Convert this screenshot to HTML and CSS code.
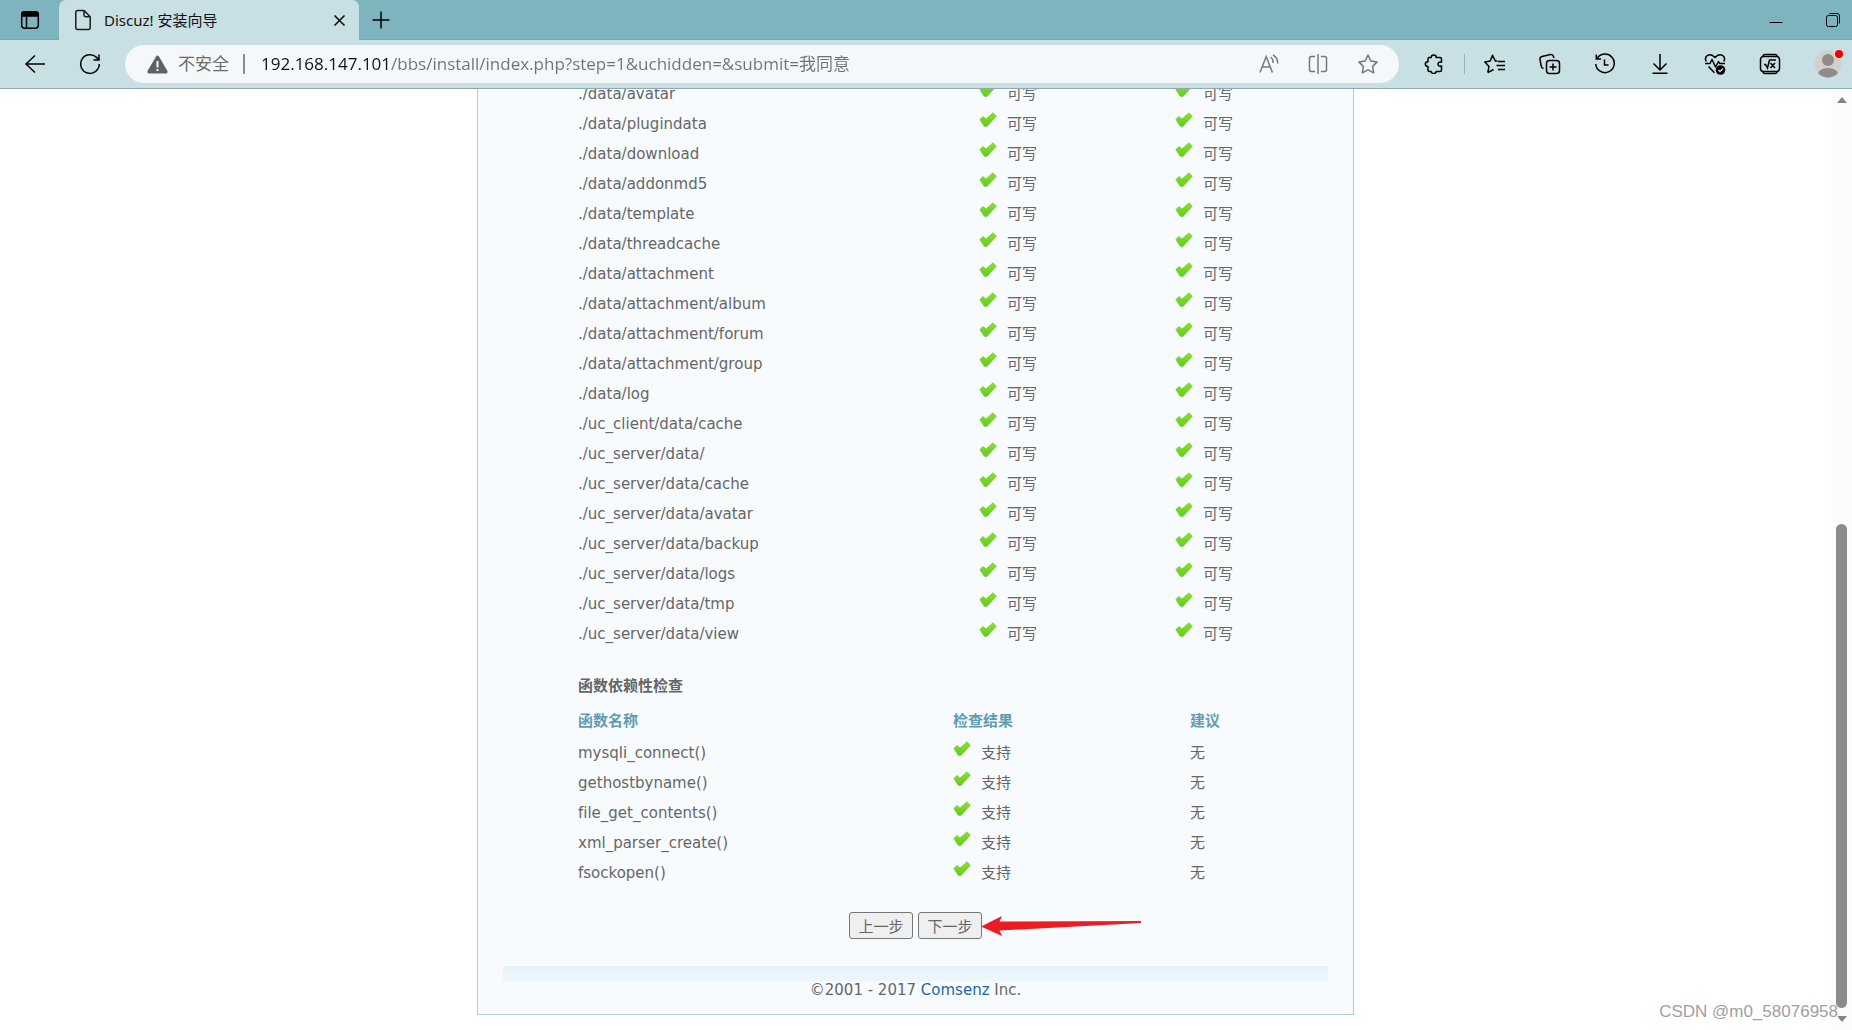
FILE: index.html
```html
<!DOCTYPE html>
<html lang="zh-CN">
<head>
<meta charset="utf-8">
<title>Discuz! 安装向导</title>
<link rel="stylesheet" href="styles.css">
</head>
<body>
<svg class="defs" aria-hidden="true">
  <defs>
    <linearGradient id="green" x1="0" y1="0" x2="0" y2="1"><stop offset="0" stop-color="#8be41c"/><stop offset="1" stop-color="#62cc1c"/></linearGradient>
    <symbol id="check" viewBox="0 0 18 16"><path d="M.8 7.600 4 4.500l3 2.500L14 .8l3.300 3.400L8.500 14Q6.800 15.600 5 14z" fill="url(#green)" stroke="#7fc46a" stroke-width=".8" stroke-linejoin="round"/></symbol>
  </defs>
</svg>
<div class="browser">
  <header class="tabbar">
    <button class="icon-btn workspaces" aria-label="标签页操作"><svg width="20" height="20" viewBox="0 0 20 20"><rect x="1.700" y="1.700" width="16.600" height="16.600" rx="3"/><path d="M2 3.500Q2 2 4 2h12q2 0 2 2v2H2z" fill="#000"/><path d="M6.500 6v12"/></svg></button>
    <div class="tab">
      <svg width="18" height="22" viewBox="0 0 18 22"><path d="M1.800 3.500Q1.800 1.500 3.800 1.500H10l6.200 6.200V18.500q0 2-2 2H3.800q-2 0-2-2zM10 1.500V6q0 1.700 1.700 1.700h4.500"/></svg>
      <span class="tab-title">Discuz! 安装向导</span>
      <button class="icon-btn" aria-label="关闭标签页"><svg width="13" height="13" viewBox="0 0 13 13"><path d="M1.500 1.500l10 10M11.500 1.500l-10 10"/></svg></button>
    </div>
    <button class="icon-btn new-tab" aria-label="新建标签页"><svg width="18" height="18" viewBox="0 0 18 18"><path d="M9 .5v17M.5 9h17"/></svg></button>
    <div class="window-controls">
      <button class="icon-btn" aria-label="最小化"><svg width="14" height="14" viewBox="0 0 14 14"><path d="M.5 9.500h13"/></svg></button>
      <button class="icon-btn" aria-label="还原"><svg width="14" height="14" viewBox="0 0 14 14"><rect x=".5" y="2.500" width="11" height="11" rx="2"/><path d="M3.500.5H11Q13.500.5 13.500 3v7.500"/></svg></button>
    </div>
  </header>

  <nav class="toolbar">
    <button class="icon-btn back" aria-label="返回"><svg width="22" height="20" viewBox="0 0 22 20"><path d="M11 1.500 2 10l9 8.500M2 10h19"/></svg></button>
    <button class="icon-btn reload" aria-label="刷新"><svg width="22" height="22" viewBox="0 0 22 22"><path d="M20.300 11A9.300 9.300 0 1 1 17.500 4.400L19.700 6.700M20 1.500v5.500h-5.500"/></svg></button>
    <div class="address">
      <svg class="warn" width="21" height="19" viewBox="0 0 21 19"><path d="M9 1.500q1.500-2 3 0l8.300 14.300q1 2.500-1.300 2.700H2q-2.300-.2-1.300-2.700z" fill="#616161" stroke="none"/><path d="M10.500 6v6.500M10.500 14v2" stroke="#f4f8fa" stroke-width="2"/></svg>
      <label class="insecure" for="url">不安全</label>
      <input id="url" class="url" type="text" spellcheck="false" value="192.168.147.101/bbs/install/index.php?step=1&amp;uchidden=&amp;submit=我同意">
      <div class="address-actions">
        <button class="icon-btn" aria-label="大声朗读"><svg width="20" height="20" viewBox="0 0 20 20"><path d="M1 18.500 7.200 2.500l6.200 16M3.200 13h8M11.500 3q3 2 2.500 6M14 .8q5 3 4.700 8.700"/></svg></button>
        <button class="icon-btn" aria-label="拆分屏幕"><svg width="20" height="20" viewBox="0 0 20 20"><path d="M10 0v20M7 2.500H3.500q-2 0-2 2v11q0 2 2 2H7M13 2.500h3.500q2 0 2 2v11q0 2-2 2H13"/></svg></button>
        <button class="icon-btn" aria-label="收藏此页"><svg width="22" height="20" viewBox="0 0 22 20"><path d="M11 1.200 13.800 7l6.400.9-4.600 4.500 1.100 6.400L11 15.800l-5.700 3 1.100-6.400L1.800 7.900 8.200 7z" stroke-linejoin="round"/></svg></button>
      </div>
    </div>
    <button class="icon-btn ext" aria-label="扩展"><svg width="20" height="20" viewBox="0 0 20 20"><path d="M4.500 3.500H7.200Q7.200 1 9.700 1t2.500 2.500H16q1.500 0 1.500 1.500v3.200q-3.500-.7-3.500 1.900t3.500 1.900V16q0 1.500-1.500 1.500h-3.800q0 2-2.500 2t-2.500-2H5.500Q4 17.500 4 16v-3.500q-2.700 0-2.700-2.400T4 7.700V5q0-1.500 1.500-1.500" stroke-linejoin="round"/></svg></button>
    <div class="tools">
      <button class="icon-btn" aria-label="收藏夹"><svg width="22" height="20" viewBox="0 0 22 20"><path d="M3.800 18.700 5 12.400.9 7.900 6.200 7 8.500 1.300 11.300 7h2.200M3.800 18.700l5.700-3.200M14 7.500h7M12.500 11.500H21M14 15.500h7" stroke-linejoin="round"/></svg></button>
      <button class="icon-btn" aria-label="集锦"><svg width="22" height="22" viewBox="0 0 22 22"><rect x="7.500" y="7.500" width="13" height="13" rx="3"/><path d="M14 10.500v7M10.500 14h7M4.500 15.500Q2.500 15 2.200 13L1 6.500Q.8 4 3 3.500l8.500-2q2.500-.3 3 2l.4 1.500"/></svg></button>
      <button class="icon-btn" aria-label="历史记录"><svg width="22" height="22" viewBox="0 0 22 22"><path d="M3 5.500A9.300 9.300 0 1 1 1.700 11M2.300 1.500V6H7M10.500 6.500v5.500H14.500"/></svg></button>
      <button class="icon-btn" aria-label="下载"><svg width="22" height="22" viewBox="0 0 22 22"><path d="M11 1v15.500M4.500 10.500 11 17l6.500-6.500M3.500 20.300h15"/></svg></button>
      <button class="icon-btn" aria-label="浏览器概要"><svg width="22" height="22" viewBox="0 0 22 22"><path d="M2.200 8.500Q.2 4.500 3.500 2.300 7.500.3 11 4.500 14.500.3 18.500 2.300q3.300 2.200 1.300 6.200M1 10.500h5l2-4 3.500 7.500 3-5.500 1 2H21M4.500 13.500l6 6.300" stroke-linejoin="round"/><circle cx="16.500" cy="17" r="4.800" fill="#000" stroke="none"/><path d="m14.500 17 1.500 1.500 3-3" stroke="#c8dfe3"/></svg></button>
      <button class="icon-btn" aria-label="数学求解器"><svg width="22" height="22" viewBox="0 0 22 22"><rect x="1.500" y="3.500" width="19" height="15" rx="3"/><path d="M4 3.500q0-2 2-2h10q2 0 2 2M4 18.500q0 2 2 2h10q2 0 2-2M5 11.500h1.500l2 3.500 2-8h6.500M11.500 10l4.500 5M16 10l-4.500 5"/></svg></button>
      <button class="icon-btn profile" aria-label="个人资料"><svg width="30" height="30" viewBox="0 0 30 30"><clipPath id="head"><circle cx="14" cy="15" r="13.500"/></clipPath><g clip-path="url(#head)"><rect width="30" height="30" fill="#d2cfcc"/><circle cx="14" cy="11" r="6" fill="#8f8a87"/><ellipse cx="14" cy="26" rx="10.500" ry="7" fill="#8f8a87"/></g><circle cx="25" cy="5" r="5" fill="#f3dcdc"/><circle cx="25" cy="5" r="4" fill="#e60000"/></svg></button>
    </div>
  </nav>

  <div class="viewport">
    <main class="page">
      <div class="box">
        <table class="perms">
          <colgroup><col class="perm-name"><col class="perm-state"><col></colgroup>
          <tbody>
            <tr><td>./data/avatar</td><td><svg class="ok"><use href="#check"/></svg>可写</td><td><svg class="ok"><use href="#check"/></svg>可写</td></tr>
            <tr><td>./data/plugindata</td><td><svg class="ok"><use href="#check"/></svg>可写</td><td><svg class="ok"><use href="#check"/></svg>可写</td></tr>
            <tr><td>./data/download</td><td><svg class="ok"><use href="#check"/></svg>可写</td><td><svg class="ok"><use href="#check"/></svg>可写</td></tr>
            <tr><td>./data/addonmd5</td><td><svg class="ok"><use href="#check"/></svg>可写</td><td><svg class="ok"><use href="#check"/></svg>可写</td></tr>
            <tr><td>./data/template</td><td><svg class="ok"><use href="#check"/></svg>可写</td><td><svg class="ok"><use href="#check"/></svg>可写</td></tr>
            <tr><td>./data/threadcache</td><td><svg class="ok"><use href="#check"/></svg>可写</td><td><svg class="ok"><use href="#check"/></svg>可写</td></tr>
            <tr><td>./data/attachment</td><td><svg class="ok"><use href="#check"/></svg>可写</td><td><svg class="ok"><use href="#check"/></svg>可写</td></tr>
            <tr><td>./data/attachment/album</td><td><svg class="ok"><use href="#check"/></svg>可写</td><td><svg class="ok"><use href="#check"/></svg>可写</td></tr>
            <tr><td>./data/attachment/forum</td><td><svg class="ok"><use href="#check"/></svg>可写</td><td><svg class="ok"><use href="#check"/></svg>可写</td></tr>
            <tr><td>./data/attachment/group</td><td><svg class="ok"><use href="#check"/></svg>可写</td><td><svg class="ok"><use href="#check"/></svg>可写</td></tr>
            <tr><td>./data/log</td><td><svg class="ok"><use href="#check"/></svg>可写</td><td><svg class="ok"><use href="#check"/></svg>可写</td></tr>
            <tr><td>./uc_client/data/cache</td><td><svg class="ok"><use href="#check"/></svg>可写</td><td><svg class="ok"><use href="#check"/></svg>可写</td></tr>
            <tr><td>./uc_server/data/</td><td><svg class="ok"><use href="#check"/></svg>可写</td><td><svg class="ok"><use href="#check"/></svg>可写</td></tr>
            <tr><td>./uc_server/data/cache</td><td><svg class="ok"><use href="#check"/></svg>可写</td><td><svg class="ok"><use href="#check"/></svg>可写</td></tr>
            <tr><td>./uc_server/data/avatar</td><td><svg class="ok"><use href="#check"/></svg>可写</td><td><svg class="ok"><use href="#check"/></svg>可写</td></tr>
            <tr><td>./uc_server/data/backup</td><td><svg class="ok"><use href="#check"/></svg>可写</td><td><svg class="ok"><use href="#check"/></svg>可写</td></tr>
            <tr><td>./uc_server/data/logs</td><td><svg class="ok"><use href="#check"/></svg>可写</td><td><svg class="ok"><use href="#check"/></svg>可写</td></tr>
            <tr><td>./uc_server/data/tmp</td><td><svg class="ok"><use href="#check"/></svg>可写</td><td><svg class="ok"><use href="#check"/></svg>可写</td></tr>
            <tr><td>./uc_server/data/view</td><td><svg class="ok"><use href="#check"/></svg>可写</td><td><svg class="ok"><use href="#check"/></svg>可写</td></tr>
          </tbody>
        </table>

        <h2 class="section-title">函数依赖性检查</h2>
        <table class="funcs">
          <colgroup><col class="func-name"><col class="func-state"><col></colgroup>
          <thead><tr><th>函数名称</th><th>检查结果</th><th>建议</th></tr></thead>
          <tbody>
            <tr><td>mysqli_connect()</td><td><svg class="ok"><use href="#check"/></svg>支持</td><td>无</td></tr>
            <tr><td>gethostbyname()</td><td><svg class="ok"><use href="#check"/></svg>支持</td><td>无</td></tr>
            <tr><td>file_get_contents()</td><td><svg class="ok"><use href="#check"/></svg>支持</td><td>无</td></tr>
            <tr><td>xml_parser_create()</td><td><svg class="ok"><use href="#check"/></svg>支持</td><td>无</td></tr>
            <tr><td>fsockopen()</td><td><svg class="ok"><use href="#check"/></svg>支持</td><td>无</td></tr>
          </tbody>
        </table>

        <div class="steps">
          <button class="step" type="button">上一步</button>
          <span class="next">
            <button class="step" type="button">下一步</button>
            <svg class="arrow" width="161" height="20" viewBox="0 0 161 20"><path d="M0 10.500 21 0l-2.500 5.500L160 5v2L18.500 14.500 21 20z" fill="#ed1c24" stroke="none"/></svg>
          </span>
        </div>
        <footer class="footer">©2001 - 2017 <a href="#">Comsenz</a> Inc.</footer>
      </div>
    </main>
    <div class="scrollbar" aria-hidden="true">
      <svg width="10" height="6" viewBox="0 0 10 6"><path d="M5 0l5 6H0z" fill="#858585" stroke="none"/></svg>
      <div class="track"><div class="thumb"></div></div>
      <svg width="10" height="6" viewBox="0 0 10 6"><path d="M5 6 0 0h10z" fill="#858585" stroke="none"/></svg>
    </div>
    <span class="watermark">CSDN @m0_58076958</span>
  </div>
</div>
</body>
</html>
```
FILE: styles.css
```css
* { box-sizing: border-box; }

body {
  margin: 0;
  background: #fff;
  font-family: "DejaVu Sans", "Noto Sans CJK SC", sans-serif;
  font-size: 15px;
  font-variant-ligatures: none;
  color: #666;
}

svg { display: block; flex: none; fill: none; stroke: currentColor; stroke-width: 1.5; }
.defs { position: absolute; width: 0; height: 0; }

.browser { display: flex; flex-direction: column; height: 100vh; }

.icon-btn {
  display: flex;
  align-items: center;
  justify-content: center;
  padding: 0;
  border: 0;
  background: none;
  color: #000;
}

/* Tab strip */
.tabbar {
  display: flex;
  align-items: center;
  flex: none;
  height: 40px;
  background: #7eb4be;
  box-shadow: inset 0 -1px #72a8b1;
}
.workspaces { width: 59px; }
.tab {
  display: flex;
  align-items: center;
  width: 300px;
  height: 40px;
  padding: 0 13px 0 15px;
  border-radius: 7px 7px 0 0;
  background: #c8dfe3;
  color: #1c1c1c;
}
.tab-title {
  flex: 1;
  margin-left: 12px;
  font: 15px/20px "Noto Sans", "Noto Sans CJK SC", sans-serif;
  color: #111;
}
.new-tab { margin-left: 13px; }
.window-controls { display: flex; gap: 43px; margin-left: auto; padding-right: 12px; }
.window-controls svg { stroke-width: 1; }

/* Toolbar */
.toolbar {
  display: flex;
  align-items: center;
  flex: none;
  height: 49px;
  border-bottom: 1px solid #91aab0;
  background: #c8dfe3;
}
.back { margin-left: 24px; }
.reload { margin-left: 33px; }
.address {
  display: flex;
  align-items: center;
  flex: 1;
  height: 38px;
  margin-left: 24px;
  padding: 0 20px 0 22px;
  border-radius: 19px;
  background: #f4f8fa;
  font: 17px/24px "Open Sans", "Noto Sans CJK SC", sans-serif;
}
.insecure {
  margin-left: 10px;
  padding-right: 14px;
  color: #6b6b6b;
  line-height: 20px;
  border-right: 2px solid #8c8c8c;
}
/* The host part is drawn darker than the rest of the address. */
.url {
  flex: 1;
  min-width: 0;
  margin-left: 16px;
  padding: 0;
  border: 0;
  outline: 0;
  font: inherit;
  color: #717171;
  background: linear-gradient(90deg, #111 128px, #717171 128px);
  -webkit-background-clip: text;
  background-clip: text;
  -webkit-text-fill-color: transparent;
}
.address-actions { display: flex; gap: 29px; }
.address-actions .icon-btn { color: #777; }
.ext { margin-left: 25px; }
.tools {
  display: flex;
  align-items: center;
  height: 20px;
  gap: 33px;
  margin-left: 20px;
  padding: 0 8px 0 19px;
  border-left: 1px solid #9bb0b4;
}
.profile svg { stroke: none; }

/* Page area */
.viewport {
  position: relative;
  display: flex;
  flex: 1;
  min-height: 0;
  overflow: hidden;
}
.page { flex: 1; }
.box {
  max-width: 877px;
  margin: -10px auto 0;
  padding: 0 25px 10px;
  border: 1px solid #b0cdd4;
  border-top: 0;
  background: #f7fbfe;
}
table { width: 675px; margin-left: 75px; border-collapse: collapse; table-layout: fixed; }
td, th { height: 30px; padding: 0; text-align: left; line-height: 30px; }
th { height: 35px; color: #629bb1; font-weight: bold; }
.perm-name { width: 401px; }
.perm-state { width: 196px; }
.func-name { width: 375px; }
.func-state { width: 237px; }
.ok { display: inline-block; width: 18px; height: 16px; margin-right: 10px; vertical-align: 1px; stroke: none; }
.section-title { margin: 20px 0 0 75px; font-size: 15px; line-height: 34px; }

.steps { display: flex; justify-content: center; gap: 5px; margin: 24px 0 25px; }
.next { position: relative; }
.step {
  display: block;
  width: 64px;
  height: 27px;
  padding: 0;
  border: 1px solid #767676;
  border-radius: 3px;
  background: #efefef;
  color: #666;
  font: 15px/25px "Noto Sans CJK SC", sans-serif;
}
.arrow { position: absolute; left: 63px; top: 4px; }
.footer {
  border-top: 2px solid #fff;
  padding-top: 10px;
  background: linear-gradient(#e5f1fa, #edf6fc) 0 0 / 100% 15px no-repeat;
  text-align: center;
  line-height: 28px;
}
.footer a { color: #2366a8; text-decoration: none; }

/* Scrollbar */
.scrollbar {
  display: flex;
  flex-direction: column;
  align-items: center;
  width: 21px;
  padding: 8px 0;
  background: #fcfcfc;
}
.track { display: flex; flex: 1; flex-direction: column; justify-content: flex-end; padding: 8px 0; }
.thumb { width: 11px; height: 54%; border-radius: 6px; background: #8b8b8b; }
.watermark {
  position: absolute;
  right: 14px;
  bottom: 8px;
  font: 17px/20px "Liberation Sans", sans-serif;
  color: #a0a0a0;
  text-shadow: 1px 1px #fff;
}
```
